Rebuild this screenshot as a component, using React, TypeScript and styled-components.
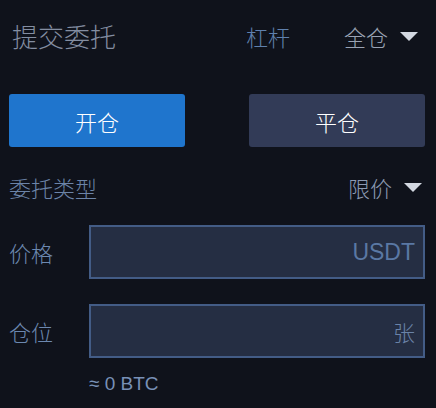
import React from "react";
import styled, { createGlobalStyle } from "styled-components";

const GlobalStyle = createGlobalStyle`
  html, body {
    margin: 0;
    padding: 0;
    background: #0f121b;
  }
  body {
    font-family: "Noto Sans CJK SC", "Liberation Sans", sans-serif;
  }
`;

const Panel = styled.div`
  width: 436px;
  height: 408px;
  box-sizing: border-box;
  padding: 0 11px 0 9px;
  background: #0f121b;
  display: flex;
  flex-direction: column;
`;

const Header = styled.div`
  height: 72px;
  display: flex;
  align-items: center;
  justify-content: space-between;
`;

const Title = styled.div`
  padding-left: 3px;
  font-size: 26px;
  font-weight: 300;
  color: #838da1;
  line-height: 1;
`;

const HeaderRight = styled.div`
  display: flex;
  align-items: center;
  padding-right: 7px;
`;

const Leverage = styled.div`
  font-size: 22px;
  font-weight: 300;
  color: #5f80ad;
  line-height: 1;
  margin-right: 54px;
`;

const Select = styled.div<{ $color: string }>`
  display: flex;
  align-items: center;
  gap: 12px;
  font-size: 22px;
  font-weight: 300;
  line-height: 1;
  color: ${(p) => p.$color};
`;

const Caret = styled.span`
  width: 0;
  height: 0;
  border-left: 9px solid transparent;
  border-right: 9px solid transparent;
  border-top: 9px solid #d3d8e1;
  margin-top: 1px;
`;

const ButtonRow = styled.div`
  margin-top: 22px;
  display: grid;
  grid-template-columns: 1fr 1fr;
  gap: 64px;
`;

const ActionButton = styled.button<{ $bg: string }>`
  height: 53px;
  border: none;
  border-radius: 3px;
  background: ${(p) => p.$bg};
  color: #ffffff;
  font-family: "Noto Sans CJK SC", sans-serif;
  font-size: 22px;
  font-weight: 300;
  padding: 0;
  cursor: pointer;
`;

const TypeRow = styled.div`
  margin-top: 20px;
  height: 40px;
  display: flex;
  align-items: center;
  justify-content: space-between;
  padding-right: 3px;
`;

const TypeLabel = styled.div`
  font-size: 22px;
  font-weight: 300;
  line-height: 1;
  color: #6c84a8;
`;

const FieldRow = styled.div<{ $mt: number }>`
  margin-top: ${(p) => p.$mt}px;
  display: grid;
  grid-template-columns: 80px 1fr;
  align-items: center;
`;

const FieldLabel = styled.div`
  font-size: 22px;
  font-weight: 300;
  line-height: 1;
  color: #6c88b0;
`;

const InputBox = styled.div`
  height: 54px;
  box-sizing: border-box;
  border: 2px solid #435c86;
  background: #252e43;
  display: flex;
  align-items: center;
  justify-content: flex-end;
  padding-right: 8px;
`;

const Unit = styled.span<{ $latin?: boolean }>`
  font-family: ${(p) =>
    p.$latin
      ? `"Liberation Sans", "Noto Sans CJK SC", sans-serif`
      : `"Noto Sans CJK SC", sans-serif`};
  font-size: ${(p) => (p.$latin ? 23 : 22)}px;
  font-weight: ${(p) => (p.$latin ? 400 : 300)};
  line-height: 1;
  color: ${(p) => (p.$latin ? "#5a78a4" : "#6a83a8")};
`;

const Estimate = styled.div`
  margin-top: 16px;
  padding-left: 80px;
  font-family: "Liberation Sans", sans-serif;
  font-size: 19px;
  line-height: 20px;
  color: #7890b6;
`;

export default function App() {
  return (
    <>
      <GlobalStyle />
      <Panel>
        <Header>
          <Title>提交委托</Title>
          <HeaderRight>
            <Leverage>杠杆</Leverage>
            <Select $color="#99a2b3">
              全仓
              <Caret />
            </Select>
          </HeaderRight>
        </Header>

        <ButtonRow>
          <ActionButton $bg="#1f75cd">开仓</ActionButton>
          <ActionButton $bg="#323b57">平仓</ActionButton>
        </ButtonRow>

        <TypeRow>
          <TypeLabel>委托类型</TypeLabel>
          <Select $color="#8b99b2">
            限价
            <Caret />
          </Select>
        </TypeRow>

        <FieldRow $mt={18}>
          <FieldLabel>价格</FieldLabel>
          <InputBox>
            <Unit $latin>USDT</Unit>
          </InputBox>
        </FieldRow>

        <FieldRow $mt={25}>
          <FieldLabel>仓位</FieldLabel>
          <InputBox>
            <Unit>张</Unit>
          </InputBox>
        </FieldRow>

        <Estimate>≈ 0 BTC</Estimate>
      </Panel>
    </>
  );
}
